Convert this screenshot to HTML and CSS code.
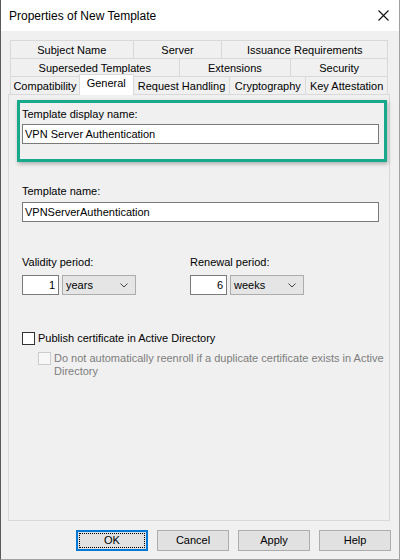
FILE: index.html
```html
<!DOCTYPE html>
<html>
<head>
<meta charset="utf-8">
<title>Properties of New Template</title>
<link rel="stylesheet" href="styles.css">
</head>
<body>
<div class="window">
  <div class="titlebar">
    <span class="title">Properties of New Template</span>
    <svg class="close" width="11" height="11" viewBox="0 0 11 11"><path d="M0.5 0.5L10.5 10.5M10.5 0.5L0.5 10.5" stroke="#111" stroke-width="1.1" fill="none"/></svg>
  </div>
  <div class="content">
    <div class="tabs">
      <div class="tabrow">
        <div class="tab t1a">Subject Name</div>
        <div class="tab t1b">Server</div>
        <div class="tab t1c">Issuance Requirements</div>
      </div>
      <div class="tabrow">
        <div class="tab t2a">Superseded Templates</div>
        <div class="tab t2b">Extensions</div>
        <div class="tab t2c">Security</div>
      </div>
      <div class="tabrow">
        <div class="tab t3a">Compatibility</div>
        <div class="tab t3b selected">General</div>
        <div class="tab t3c">Request Handling</div>
        <div class="tab t3d">Cryptography</div>
        <div class="tab t3e">Key Attestation</div>
      </div>
    </div>
    <div class="panel">
      <div class="highlight">
        <div class="label">Template display name:</div>
        <div class="textbox first">VPN Server Authentication</div>
      </div>
      <div class="label name-label">Template name:</div>
      <div class="textbox second">VPNServerAuthentication</div>
      <div class="periods">
        <div class="period">
          <div class="label">Validity period:</div>
          <div class="period-controls">
            <div class="num">1</div>
            <div class="select"><span>years</span><svg width="8" height="5" viewBox="0 0 8 5"><path d="M0.5 0.5L4 4L7.5 0.5" stroke="#444" fill="none"/></svg></div>
          </div>
        </div>
        <div class="period">
          <div class="label">Renewal period:</div>
          <div class="period-controls">
            <div class="num">6</div>
            <div class="select"><span>weeks</span><svg width="8" height="5" viewBox="0 0 8 5"><path d="M0.5 0.5L4 4L7.5 0.5" stroke="#444" fill="none"/></svg></div>
          </div>
        </div>
      </div>
      <div class="check check-main">
        <span class="box"></span>
        <span class="check-text">Publish certificate in Active Directory</span>
      </div>
      <div class="check check-sub disabled">
        <span class="box"></span>
        <span class="check-text">Do not automatically reenroll if a duplicate certificate exists in Active<br>Directory</span>
      </div>
    </div>
    <div class="buttons">
      <div class="btn default"><span class="focus">OK</span></div>
      <div class="btn">Cancel</div>
      <div class="btn">Apply</div>
      <div class="btn">Help</div>
    </div>
  </div>
</div>
</body>
</html>
```

FILE: styles.css
```css
html, body {
  margin: 0;
  padding: 0;
  background: #f0f0f0;
}

.window {
  width: 400px;
  height: 560px;
  box-sizing: border-box;
  border-left: 1px solid #5a5a5a;
  border-right: 1px solid #a0a0a0;
  border-bottom: 1px solid #a0a0a0;
  background: #f0f0f0;
  font-family: "Liberation Sans", Arial, sans-serif;
  font-size: 11px;
  color: #000;
  overflow: hidden;
}

.titlebar {
  height: 31px;
  background: #fff;
  display: flex;
  align-items: center;
  justify-content: space-between;
  padding: 0 10px 0 8px;
}

.title {
  font-size: 12px;
  padding-top: 1px;
}

.close {
  display: block;
}

.content {
  padding: 9px 9px 0 7px;
}

.tabs {
  margin: 0 2px;
}

.tabrow {
  display: flex;
  height: 18px;
  align-items: flex-start;
}

.tab {
  box-sizing: border-box;
  height: 18px;
  border: 1px solid #d9d9d9;
  border-bottom: none;
  margin-left: -1px;
  background: #f0f0f0;
  text-align: center;
  line-height: 18px;
  white-space: nowrap;
}

.tab:first-child {
  margin-left: 0;
}

.t1a { width: 124px; }
.t1b { width: 90px; }
.t1c { width: 167px; }
.t2a { width: 170px; }
.t2b { width: 113px; }
.t2c { width: 98px; }
.t3a { width: 70px; }
.t3b { width: 55px; }
.t3c { width: 98px; }
.t3d { width: 77px; }
.t3e { width: 83px; }

.tab.selected {
  position: relative;
  z-index: 2;
  height: 21px;
  margin-top: -2px;
  background: #fff;
  border-color: #d9d9d9;
  line-height: 16px;
}

.panel {
  box-sizing: border-box;
  height: 427px;
  border: 1px solid #d9d9d9;
  background: #f0f0f0;
  padding: 0 10px 0 13px;
  position: relative;
  z-index: 1;
}

.highlight {
  margin: 5px -8px 0 -5px;
  border: 3px solid #18a98a;
  padding: 5px 5px 15px 2px;
  box-shadow: 1px 2px 4px rgba(0, 0, 0, 0.28);
}

.label {
  line-height: 13px;
  height: 13px;
  white-space: nowrap;
}

.textbox {
  box-sizing: border-box;
  height: 20px;
  border: 1px solid #7a7a7a;
  background: #fff;
  padding-left: 2px;
  line-height: 18px;
  white-space: nowrap;
}

.textbox.first {
  margin-top: 3px;
}

.name-label {
  margin-top: 23px;
}

.textbox.second {
  margin-top: 4px;
}

.periods {
  margin-top: 34px;
  display: grid;
  grid-template-columns: 168px auto;
}

.period-controls {
  margin-top: 6px;
  display: flex;
  gap: 3px;
}

.num {
  box-sizing: border-box;
  width: 37px;
  height: 20px;
  border: 1px solid #7a7a7a;
  background: #fff;
  text-align: right;
  padding-right: 3px;
  line-height: 18px;
}

.select {
  box-sizing: border-box;
  width: 74px;
  height: 20px;
  border: 1px solid #adadad;
  background: #e5e5e5;
  display: flex;
  align-items: center;
  justify-content: space-between;
  padding: 0 7px 0 3px;
  line-height: 18px;
}

.select svg {
  display: block;
}

.check {
  display: flex;
  align-items: flex-start;
}

.check-main {
  margin-top: 37px;
}

.check-sub {
  margin-top: 7px;
  padding-left: 16px;
}

.box {
  flex: none;
  box-sizing: border-box;
  width: 13px;
  height: 13px;
  border: 1px solid #333;
  background: #fff;
}

.check-text {
  margin-left: 3px;
  line-height: 13px;
  white-space: nowrap;
}

.disabled .box {
  border-color: #cccccc;
  background: #f7f7f7;
}

.disabled .check-text {
  color: #7d7d7d;
}

.buttons {
  margin: 9px -1px 0 0;
  display: flex;
  justify-content: flex-end;
  gap: 9px;
}

.btn {
  box-sizing: border-box;
  width: 72px;
  height: 21px;
  border: 1px solid #adadad;
  background: #e1e1e1;
  display: flex;
  align-items: center;
  justify-content: center;
  line-height: 17px;
}

.btn.default {
  border: 2px solid #0078d7;
  padding: 1px;
  align-items: stretch;
}

.focus {
  flex: 1;
  border: 1px dotted #000;
  display: flex;
  align-items: center;
  justify-content: center;
  line-height: 13px;
}
```
